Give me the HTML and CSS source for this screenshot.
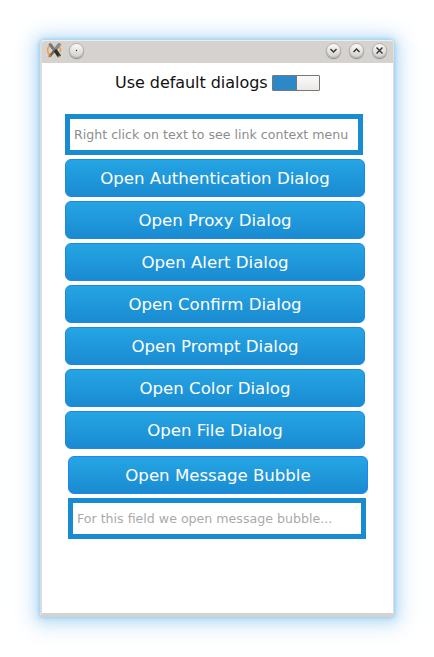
FILE: index.html
```html
<!DOCTYPE html>
<html lang="en">
<head>
<meta charset="utf-8">
<title>Dialogs</title>
<link rel="stylesheet" href="styles.css">
</head>
<body>
<main class="window">
  <header class="titlebar">
    <svg class="logo" width="15" height="15" viewBox="0 0 15 15" fill="none">
      <path d="M4 2.500C1 3 0 6 1 9c.5 2 1 2 2 3M11 3c3 2 3 4 2 6" stroke="#f79a3c" stroke-width="1.500"/>
      <path d="M13 .5 8 7" stroke="#8a8a8a" stroke-width="3.600"/>
      <path d="M8 7 2.500 13.500" stroke="#6d6254" stroke-width="2.600"/>
      <path d="M2.500 .5 8 8" stroke="#77777a" stroke-width="3"/>
      <path d="m8 7 4.500 6.500" stroke="#30302c" stroke-width="3.800"/>
      <path d="m1.500 14 2-2M11 14l2-1" stroke="#c28b32" stroke-width="1.400"/>
    </svg>
    <span class="control menu"><svg width="15" height="15" viewBox="0 0 15 15"><circle cx="7.500" cy="7.500" r=".7" fill="#333"/></svg></span>
    <span class="control"><svg width="15" height="15" viewBox="0 0 15 15"><path d="m4.500 6 3 3 3-3"/></svg></span>
    <span class="control"><svg width="15" height="15" viewBox="0 0 15 15"><path d="m4.500 9 3-3 3 3"/></svg></span>
    <span class="control"><svg width="15" height="15" viewBox="0 0 15 15"><path d="m4.500 4.500 6 6m0-6-6 6"/></svg></span>
  </header>
  <section class="content">
    <div class="setting"><span class="label">Use default dialogs</span><span class="switch"></span></div>
    <div class="stack">
      <div class="field">Right click on text to see link context menu</div>
      <button class="button">Open Authentication Dialog</button>
      <button class="button">Open Proxy Dialog</button>
      <button class="button">Open Alert Dialog</button>
      <button class="button">Open Confirm Dialog</button>
      <button class="button">Open Prompt Dialog</button>
      <button class="button">Open Color Dialog</button>
      <button class="button">Open File Dialog</button>
    </div>
    <div class="stack bubble">
      <button class="button">Open Message Bubble</button>
      <div class="field pale">For this field we open message bubble...</div>
    </div>
  </section>
</main>
</body>
</html>
```
FILE: styles.css
```css
* { box-sizing: border-box; }
body {
  margin: 0;
  height: 657px;
  padding: 40px;
  background: #fff;
  overflow: hidden;
  font-family: "DejaVu Sans", sans-serif;
}
.window {
  width: 354px;
  height: 577px;
  display: flex;
  flex-direction: column;
  background: #fff;
  border: solid #d6d2cf;
  border-width: 1px 1px 4px 2px;
  border-color: #efedeb #e0dfde #d6d2cf #dedcda;
  border-radius: 4px 4px 2px 2px;
  box-shadow: 0 0 4px #83c6ec, 0 1px 13px 3px #b2dbf4, 0 2px 24px 10px #e6f1fc;
}
.titlebar {
  height: 22px;
  flex: none;
  display: flex;
  align-items: center;
  gap: 8px;
  padding: 0 6px 3px 5px;
  background: #d6d2cf;
  border-radius: 3px 3px 0 0;
}
.logo { display: block; }
.control {
  width: 15px;
  height: 15px;
  border-radius: 50%;
  border: 1px solid #b2b0ad;
  background: linear-gradient(#fafafa, #d2d0ce);
  box-shadow: 0 1px 1px #8a8784;
  display: flex;
  align-items: center;
  justify-content: center;
}
.control svg { flex: none; fill: none; stroke: #333; stroke-width: 1.4; }
.control svg circle { stroke: none; }
.menu { margin-right: auto; margin-left: -1px; }
.content { flex: 1; }
.setting {
  display: flex;
  align-items: center;
  height: 40px;
  padding-left: 73px;
  gap: 5px;
}
.label { font-size: 16px; letter-spacing: -.05px; line-height: 20px; white-space: nowrap; width: 152px; color: #111; }
.switch {
  width: 48px;
  height: 16px;
  border: 1px solid #777;
  border-radius: 1px;
  background: linear-gradient(90deg, #2d88c7 23px, #777 23px 24px, transparent 24px), linear-gradient(#fafafa, #ebe9e7);
}
.stack { width: 300px; display: flex; flex-direction: column; gap: 4px; margin: 11px 0 0 23px; }
.bubble { margin: 7px 0 0 26px; }
.field {
  width: 298px;
  height: 41px;
  border: 5px solid #198cd1;
  padding-left: 4px;
  font-size: 12.6px;
  line-height: 31px;
  color: #8d8d8d;
  white-space: nowrap;
}
.pale { color: #aaa; }
.button {
  height: 38px;
  padding: 0;
  border: 1px solid #1f85f5;
  border-radius: 6px;
  background: linear-gradient(#25a5e4, #1a8bd1);
  color: #fff;
  font: 16.6px "DejaVu Sans", sans-serif;
}
```
